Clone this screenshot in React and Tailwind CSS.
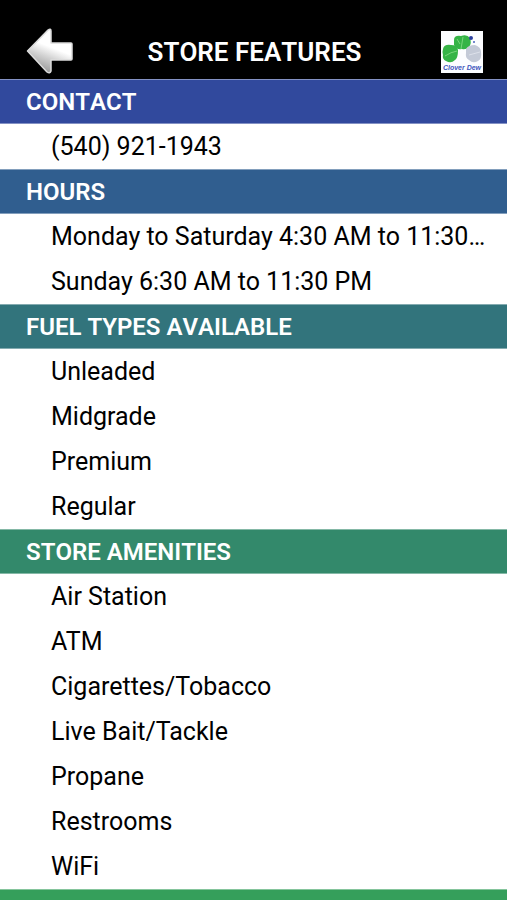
const sections = [
  { title: "CONTACT", color: "bg-[#31499d]", items: ["(540) 921-1943"] },
  {
    title: "HOURS",
    color: "bg-[#305e8f]",
    items: ["Monday to Saturday 4:30 AM to 11:30 PM", "Sunday 6:30 AM to 11:30 PM"],
  },
  {
    title: "FUEL TYPES AVAILABLE",
    color: "bg-[#32747c]",
    items: ["Unleaded", "Midgrade", "Premium", "Regular"],
  },
  {
    title: "STORE AMENITIES",
    color: "bg-[#33896b]",
    items: ["Air Station", "ATM", "Cigarettes/Tobacco", "Live Bait/Tackle", "Propane", "Restrooms", "WiFi"],
  },
];

function BackArrow() {
  return (
    <svg viewBox="0 0 48 48" className="size-12" aria-hidden="true">
      <defs>
        <linearGradient id="arrowFill" x1="0.3" y1="0.9" x2="0.5" y2="0.4">
          <stop offset="0" stopColor="#a0a0a0" />
          <stop offset="0.55" stopColor="#d2d2d2" />
          <stop offset="1" stopColor="#ffffff" />
        </linearGradient>
      </defs>
      <path
        d="M1.5 23 L22 2 Q25 0 25 3 V15 H45 Q46 15 46 16 V31 Q46 32 45 32 H25 V43 Q24 46 21 44 Z"
        fill="url(#arrowFill)"
        stroke="#dcdcdc"
        strokeWidth="1.5"
        strokeLinejoin="round"
      />
    </svg>
  );
}

function Logo() {
  return (
    <svg viewBox="0 0 42 42" className="size-[42px]" role="img" aria-label="Clover Dew">
      <rect width="42" height="42" fill="#fcfdff" />
      <path d="M13 9 Q13 4 20 5 Q26 3 29 7 Q31 12 28 16 Q25 19 21 18 Q15 19 13 14 Z" fill="#35b446" />
      <path d="M2 18 Q3 13 10 14 Q16 14 17 19 Q17 27 14 29 Q10 33 5 30 Q1 28 2 24 Q1 21 2 18 Z" fill="#35b446" />
      <path d="M25 18 Q27 14 34 14 Q40 16 40 21 Q41 28 37 30 Q32 33 28 29 Q24 27 25 22 Z" fill="#c4cad7" />
      <path d="M22 6 L20 18 M16 8 L19 13 M16 20 Q10 21 4 25" fill="none" stroke="#78d67b" strokeWidth="1" />
      <path d="M39 21 L28 24" stroke="#dde1ea" strokeWidth="1" />
      <circle cx="30" cy="7" r="2" fill="#2b3f9f" />
      <circle cx="33" cy="11" r="1" fill="#4863bb" />
      <text
        x="21"
        y="39"
        textAnchor="middle"
        fill="#4257bd"
        className="font-['Liberation_Sans',sans-serif] text-[7px] font-bold italic"
      >
        Clover Dew
      </text>
    </svg>
  );
}

function Section({ title, color, items }) {
  return (
    <section>
      <h2 className={`h-[45px] truncate border-y border-white/40 pt-px pl-[26px] text-2xl leading-[43px] font-semibold text-white [font-kerning:none] ${color}`}>
        {title}
      </h2>
      <ul>
        {items.map((item) => (
          <li key={item} className="h-[45px] truncate pr-5 pl-[51px] text-[25px] leading-[45px]">
            {item}
          </li>
        ))}
      </ul>
    </section>
  );
}

export default function App() {
  return (
    <div className="h-screen overflow-hidden bg-white font-[Roboto,sans-serif] text-black">
      <header className="grid h-[79px] grid-cols-[1fr_auto_1fr] items-center bg-black pt-6 pr-6 pl-[26px] text-white">
        <button type="button" aria-label="Back" className="justify-self-start">
          <BackArrow />
        </button>
        <h1 className="text-[26px] leading-8 font-semibold [font-kerning:none]">STORE FEATURES</h1>
        <div className="justify-self-end">
          <Logo />
        </div>
      </header>
      <main>
        {sections.map((section) => (
          <Section key={section.title} {...section} />
        ))}
        <div className="h-[45px] border-t border-white/40 bg-[#359f5b]" />
      </main>
    </div>
  );
}
